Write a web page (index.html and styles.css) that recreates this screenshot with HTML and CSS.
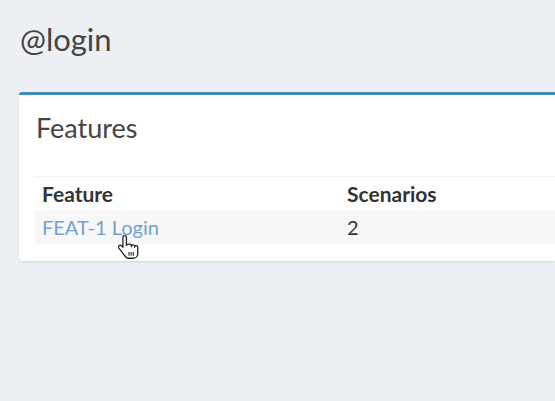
FILE: index.html
```html
<!DOCTYPE html>
<html>
<head>
<meta charset="utf-8">
<link rel="stylesheet" href="styles.css">
</head>
<body>
<div class="page">
  <h1 class="page-title">@login</h1>
  <div class="box">
    <div class="box-header">
      <h3 class="box-title">Features</h3>
    </div>
    <div class="box-body">
      <table class="table">
        <thead>
          <tr><th class="col-feature">Feature</th><th>Scenarios</th></tr>
        </thead>
        <tbody>
          <tr class="striped"><td><a class="link" href="#">FEAT-1 Login</a></td><td>2</td></tr>
        </tbody>
      </table>
      <svg class="cursor" width="22" height="26" viewBox="0 0 20 24">
        <path d="M6 1.5c-1 0-1.6.7-1.6 1.6v9.2l-1.4-1.4c-.8-.8-1.9-.7-2.4 0-.5.6-.4 1.5.1 2.1l4.2 5.6c1 1.4 2.4 3.8 4.6 3.8h4.2c2.5 0 4.4-2 4.4-4.5v-5.5c0-1-.7-1.6-1.5-1.6s-1.4.6-1.4 1.4v-.6c0-.9-.7-1.5-1.5-1.5s-1.5.6-1.5 1.4v-.6c0-.9-.7-1.5-1.5-1.5S7.6 9.7 7.6 10.5V3.1C7.6 2.2 7 1.5 6 1.5z" fill="#fff" stroke="#222" stroke-width="1.2" stroke-linejoin="round"/>
        <path d="M10 16.5v3.5M12 16.5v3.5M14 16.5v3.5" stroke="#222" stroke-width="1"/>
      </svg>
    </div>
  </div>
</div>
</body>
</html>
```

FILE: styles.css
```css
html, body {
  margin: 0;
  padding: 0;
  background: #ecf0f5;
  overflow: hidden;
}
body {
  font-family: Lato, "Open Sans", sans-serif;
  color: #333;
  width: 555px;
  height: 401px;
}
.page {
  padding: 22px 0 0 19px;
}
.page-title {
  margin: 0 0 0 1px;
  font-size: 31px;
  font-weight: 400;
  line-height: 34px;
  color: #444;
}
.box {
  margin-top: 36px;
  background: #fff;
  border-top: 3px solid #3c8dbc;
  border-radius: 3px 0 0 3px;
  box-shadow: 0 1px 2px rgba(0,0,0,0.12);
}
.box-header {
  padding: 18px 17px 0;
  height: 63px;
}
.box-title {
  margin: 0;
  font-size: 27px;
  font-weight: 400;
  line-height: 30px;
  color: #444;
}
.box-body {
  position: relative;
  padding: 0 0 17px 16px;
}
.table {
  border-collapse: collapse;
  width: 100%;
  font-size: 20px;
}
.table th, .table td {
  text-align: left;
  padding: 0 7px;
  height: 34px;
}
.table th {
  height: 33px;
  border-top: 1px solid #f2f2f2;
  font-size: 21px;
  font-weight: 700;
  color: #333;
}
.col-feature {
  width: 291px;
}
.striped td {
  background: #f7f7f7;
}
.link {
  color: #6fa3d3;
  text-decoration: none;
}
.cursor {
  position: absolute;
  left: 99px;
  top: 58px;
}
```
